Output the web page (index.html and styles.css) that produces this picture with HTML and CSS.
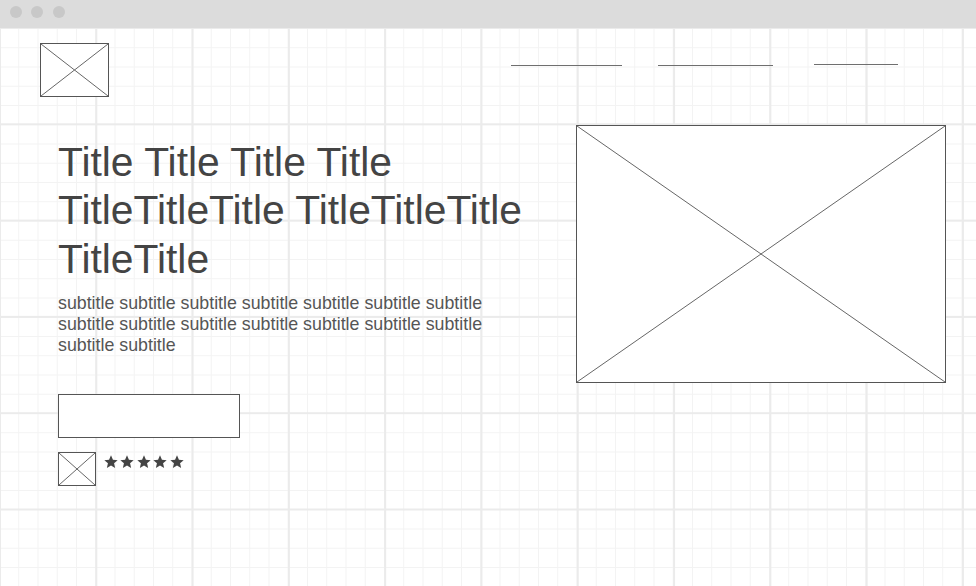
FILE: index.html
```html
<!DOCTYPE html>
<html>
<head>
<meta charset="utf-8">
<link rel="stylesheet" href="styles.css">
</head>
<body>
<div class="topbar">
  <span class="dot"></span><span class="dot"></span><span class="dot"></span>
</div>
<div class="page">
  <header class="header">
    <div class="ph logo">
      <svg viewBox="0 0 100 100" preserveAspectRatio="none"><line x1="0" y1="0" x2="100" y2="100"/><line x1="100" y1="0" x2="0" y2="100"/></svg>
    </div>
    <nav class="nav">
      <span class="nav-item nav-a"></span>
      <span class="nav-item nav-b"></span>
      <span class="nav-item nav-c"></span>
    </nav>
  </header>
  <section class="hero">
    <div class="hero-text">
      <h1 class="title">Title Title Title Title TitleTitleTitle TitleTitleTitle TitleTitle</h1>
      <p class="subtitle">subtitle subtitle subtitle subtitle subtitle subtitle subtitle subtitle subtitle subtitle subtitle subtitle subtitle subtitle subtitle subtitle</p>
      <div class="button"></div>
      <div class="rating">
        <div class="ph avatar">
          <svg viewBox="0 0 100 100" preserveAspectRatio="none"><line x1="0" y1="0" x2="100" y2="100"/><line x1="100" y1="0" x2="0" y2="100"/></svg>
        </div>
        <div class="stars">
          <svg class="star" viewBox="0 0 24 24"><polygon points="12,2 14.9,8.6 22,9.3 16.6,14 18.2,21 12,17.3 5.8,21 7.4,14 2,9.3 9.1,8.6"/></svg>
          <svg class="star" viewBox="0 0 24 24"><polygon points="12,2 14.9,8.6 22,9.3 16.6,14 18.2,21 12,17.3 5.8,21 7.4,14 2,9.3 9.1,8.6"/></svg>
          <svg class="star" viewBox="0 0 24 24"><polygon points="12,2 14.9,8.6 22,9.3 16.6,14 18.2,21 12,17.3 5.8,21 7.4,14 2,9.3 9.1,8.6"/></svg>
          <svg class="star" viewBox="0 0 24 24"><polygon points="12,2 14.9,8.6 22,9.3 16.6,14 18.2,21 12,17.3 5.8,21 7.4,14 2,9.3 9.1,8.6"/></svg>
          <svg class="star" viewBox="0 0 24 24"><polygon points="12,2 14.9,8.6 22,9.3 16.6,14 18.2,21 12,17.3 5.8,21 7.4,14 2,9.3 9.1,8.6"/></svg>
        </div>
      </div>
    </div>
    <div class="ph hero-image">
      <svg viewBox="0 0 100 100" preserveAspectRatio="none"><line x1="0" y1="0" x2="100" y2="100"/><line x1="100" y1="0" x2="0" y2="100"/></svg>
    </div>
  </section>
</div>
</body>
</html>
```

FILE: styles.css
```css
html, body {
  margin: 0;
  padding: 0;
}
body {
  width: 976px;
  height: 586px;
  overflow: hidden;
  font-family: "Liberation Sans", Arial, sans-serif;
  background: #ffffff;
}
.topbar {
  height: 28px;
  background: #dcdcdc;
  display: flex;
  align-items: center;
  gap: 9.5px;
  padding-left: 9.5px;
  box-sizing: border-box;
  padding-bottom: 4px;
}
.dot {
  width: 12px;
  height: 12px;
  border-radius: 50%;
  background: #c8c8c8;
}
.page {
  height: 558px;
  box-sizing: border-box;
  padding: 15px 0 0 40px;
  background-color: #ffffff;
  background-image:
    linear-gradient(to right, #ebebeb 2px, transparent 2px),
    linear-gradient(to bottom, #ebebeb 2px, transparent 2px),
    linear-gradient(to right, #f3f3f3 1px, transparent 1px),
    linear-gradient(to bottom, #f3f3f3 1px, transparent 1px);
  background-size: 96.3px 96.3px, 96.3px 96.3px, 19.26px 19.26px, 19.26px 19.26px;
  background-position: -1px -1px, -1px -1px, -1px 0, -1px 0;
}
.ph {
  box-sizing: border-box;
  border: 1px solid #555555;
  background: #ffffff;
  position: relative;
}
.ph svg {
  display: block;
  width: 100%;
  height: 100%;
}
.ph line {
  stroke: #666666;
  stroke-width: 1;
  vector-effect: non-scaling-stroke;
}
.header {
  display: flex;
  justify-content: space-between;
  align-items: flex-start;
  padding-right: 78px;
}
.logo {
  width: 69px;
  height: 54px;
}
.nav {
  display: flex;
  padding-top: 22px;
}
.nav-item {
  display: block;
  height: 1px;
  border-top: 1px solid #6f6f6f;
}
.nav-a { width: 111px; }
.nav-b { width: 115px; margin-left: 36px; }
.nav-c { width: 84px; margin-left: 41px; margin-top: -1px; }
.hero {
  display: flex;
  align-items: flex-start;
  margin-top: 28px;
  padding-right: 30px;
}
.hero-text {
  width: 480px;
  margin-left: 18px;
  padding-top: 12.6px;
}
.title {
  margin: 0;
  font-weight: normal;
  font-size: 40.8px;
  line-height: 48.5px;
  color: #444444;
}
.subtitle {
  margin: 10px 0 0 0;
  font-size: 17.8px;
  line-height: 21px;
  color: #555555;
  width: 470px;
}
.button {
  margin-top: 38px;
  width: 182px;
  height: 44px;
  box-sizing: border-box;
  border: 1px solid #555555;
  background: #ffffff;
}
.rating {
  display: flex;
  align-items: flex-start;
  margin-top: 14px;
  gap: 6.7px;
}
.avatar {
  width: 38px;
  height: 34px;
}
.stars {
  display: flex;
  gap: 0.5px;
  margin-top: 1.5px;
}
.star {
  width: 16px;
  height: 16px;
  display: block;
}
.star polygon {
  fill: #444444;
}
.hero-image {
  margin-left: auto;
  width: 370px;
  height: 258px;
}
```
